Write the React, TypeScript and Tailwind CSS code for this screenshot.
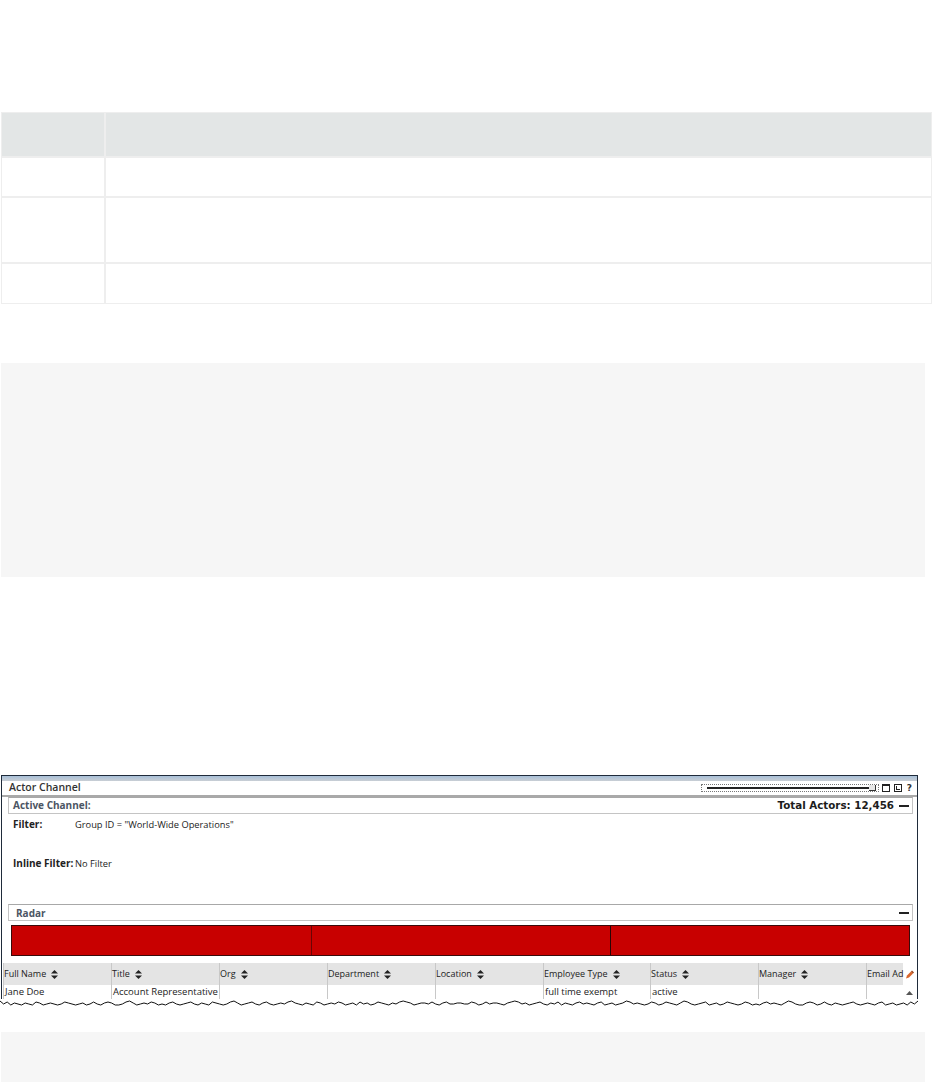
const columns = [
  { name: "Full Name", value: "Jane Doe", width: "w-[108px]" },
  { name: "Title", value: "Account Representative", width: "w-[108px]" },
  { name: "Org", value: "", width: "w-[108px]" },
  { name: "Department", value: "", width: "w-[108px]" },
  { name: "Location", value: "", width: "w-[108px]" },
  { name: "Employee Type", value: "full time exempt", width: "w-[107px]" },
  { name: "Status", value: "active", width: "w-[108px]" },
  { name: "Manager", value: "", width: "w-[108px]" },
];

// torn paper edge along the bottom of the screenshot
const edgeHalf = [
  0, 3, 1, 4, 2, 3, 4, 2, 3, 4, 1, 2, 4, 3, 2, 3, 4, 3, 1, 2, 3, 4, 3, 2, 4, 3, 1, 3, 4, 2, 1, 2, 4, 4, 3, 1, 0, 2, 4, 3,
  2, 3, 1, 2, 4, 3, 4, 2, 1, 3, 4, 3, 2, 1, 3, 4, 2, 3, 4, 1, 2, 3, 4, 3, 1, 0, 2, 4, 3, 2, 1, 3, 4, 2, 1, 3, 4, 3, 2, 3,
  1, 0, 2, 3, 4, 2, 3, 4, 1, 2, 4, 3, 2, 3, 1, 2, 4, 3, 2, 4, 1, 3, 2, 4, 3, 1, 2, 3, 4, 2, 3, 1, 0, 1, 2, 4, 3, 2, 2, 3,
  1, 3, 4, 2, 1, 3, 3, 2,
];
const tornEdge = [...edgeHalf, ...[...edgeHalf].reverse()];

function tornPath() {
  const step = 918 / (tornEdge.length - 1);
  return tornEdge.map((y, i) => `${(i * step).toFixed(1)},${y + 2}`).join(" ");
}

function SortArrows() {
  return (
    <svg width="7" height="9" viewBox="0 0 7 9" className="ml-[5px] shrink-0 fill-[#222]">
      <path d="M3.5 0 7 3.5H0Z" />
      <path d="M0 5.5h7L3.5 9Z" />
    </svg>
  );
}

function SectionBar({ title, right, indent }: { title: string; right?: string; indent: string }) {
  return (
    <div className="flex h-[17px] items-center justify-between border border-[#c4c4c4] border-t-[#a8a8a8] bg-white pr-[3px]">
      <span className={`${indent} font-['Open_Sans',sans-serif] text-[10px] font-bold text-[#4b5563]`}>{title}</span>
      <div className="flex items-center gap-[5px]">
        {right && <span className="font-['DejaVu_Sans',sans-serif] text-[10.3px] font-bold text-[#1c1c1c]">{right}</span>}
        <span className="h-[2px] w-[10px] bg-[#222]" />
      </div>
    </div>
  );
}

export default function App() {
  return (
    <div className="h-[1082px] w-[932px] overflow-hidden bg-white pt-[112px] font-['Open_Sans',sans-serif]">
      {/* empty reference table */}
      <div className="ml-px grid h-[192px] w-[931px] grid-cols-[102px_1fr] grid-rows-[43px_38px_64px_39px] gap-x-[2px] gap-y-[2px] border border-[#eeeeee] bg-[#eeeeee]">
        <div className="bg-[#e3e6e6]" />
        <div className="bg-[#e3e6e6]" />
        <div className="bg-white" />
        <div className="bg-white" />
        <div className="bg-white" />
        <div className="bg-white" />
        <div className="bg-white" />
        <div className="bg-white" />
      </div>

      <div className="ml-px mt-[59px] h-[214px] w-[924px] bg-[#f6f6f6]" />

      {/* Actor Channel screenshot */}
      <div className="relative mt-[198px] h-[231px] w-[918px] overflow-hidden">
        <div className="ml-px flex h-[231px] w-[917px] flex-col border-x border-t border-[#1f2b3a] bg-white">
          <div className="h-[5px] bg-gradient-to-b from-[#a8c0d8] to-[#c9ced4]" />
          <div className="flex h-[16px] items-center justify-between border-b-2 border-[#a9a9a9] pl-[7px] pr-[5px]">
            <span className="text-[10.5px] font-semibold text-[#333]">Actor Channel</span>
            <div className="flex items-center">
              <div className="flex h-[8px] w-[178px] items-center border border-dotted border-[#777] pl-[5px] pr-[2px]">
                <div className="h-[2px] flex-1 bg-[#222]" />
                <div className="h-[6px] w-[7px] border-b border-r border-[#333] bg-[#e8e8e8]" />
              </div>
              <div className="ml-[3px] h-[8px] w-[8px] border border-t-2 border-[#222]" />
              <div className="relative ml-[4px] h-[8px] w-[8px] border border-[#222]">
                <div className="absolute left-[1px] top-[1px] h-[4px] w-[4px] border-b border-l border-[#222]" />
              </div>
              <span className="ml-[5px] font-['DejaVu_Sans',sans-serif] text-[9px] font-bold leading-none text-[#333]">?</span>
            </div>
          </div>

          <div className="pl-[6px] pr-[4px]">
            <SectionBar title="Active Channel:" right="Total Actors: 12,456" indent="pl-[4px]" />
          </div>

          <div className="h-[90px] pl-[11px] pt-[3px] text-[9.3px] leading-[15px] text-[#222]">
            <div className="flex">
              <span className="w-[62px] text-[10px] font-bold">Filter:</span>
              <span>Group ID = "World-Wide Operations"</span>
            </div>
            <div className="mt-[24px] flex">
              <span className="w-[62px] whitespace-nowrap text-[10px] font-bold">Inline Filter:</span>
              <span>No Filter</span>
            </div>
          </div>

          <div className="pl-[6px] pr-[4px]">
            <SectionBar title="Radar" indent="pl-[7px] pt-px" />
            <div className="mx-[3px] mt-[4px] flex h-[31px] border border-[#3a0a0a] bg-[#c80000]">
              <div className="w-[300px] border-r border-[#6a0505]" />
              <div className="w-[299px] border-r border-[#2a0505]" />
            </div>
          </div>

          <div className="mt-[7px] flex pl-px">
            {columns.map((col) => (
              <div key={col.name} className={col.width}>
                <div className="flex h-[22px] items-center border-l border-[#c8c8c8] bg-[#e4e4e4] text-[9px] text-[#222]">
                  <span>{col.name}</span>
                  <SortArrows />
                </div>
                <div className="flex h-[15px] items-center border-b border-l border-[#c8c8c8] pl-px pt-px text-[9.5px] text-[#222]">
                  {col.value}
                </div>
              </div>
            ))}
            <div className="w-[37px]">
              <div className="flex h-[22px] items-center whitespace-nowrap border-l border-[#c8c8c8] bg-[#e4e4e4] text-[9px] text-[#222]">
                Email Ad
              </div>
              <div className="h-[15px] border-b border-l border-[#c8c8c8]" />
            </div>
            <div className="flex w-[13px] flex-col items-center">
              <svg width="9" height="21" viewBox="0 0 9 21">
                <path d="M1 15.5 2 12.5 6 8.5 8 10.5 4 14.5Z" fill="#d8662c" />
                <path d="M6 8.5 7 7.5 9 9.5 8 10.5Z" fill="#9a3f12" />
              </svg>
              <svg width="7" height="4" viewBox="0 0 7 4" className="mt-[7px]">
                <path d="M3.5 0 7 4H0Z" fill="#555" />
              </svg>
            </div>
          </div>
        </div>

        <svg width="918" height="7" viewBox="0 0 918 7" className="absolute bottom-0 left-0 bg-white">
          <polyline points={tornPath()} fill="none" stroke="#111" strokeWidth="1" />
        </svg>
      </div>

      <div className="ml-px mt-[26px] h-[50px] w-[924px] bg-[#f6f6f6]" />
    </div>
  );
}
